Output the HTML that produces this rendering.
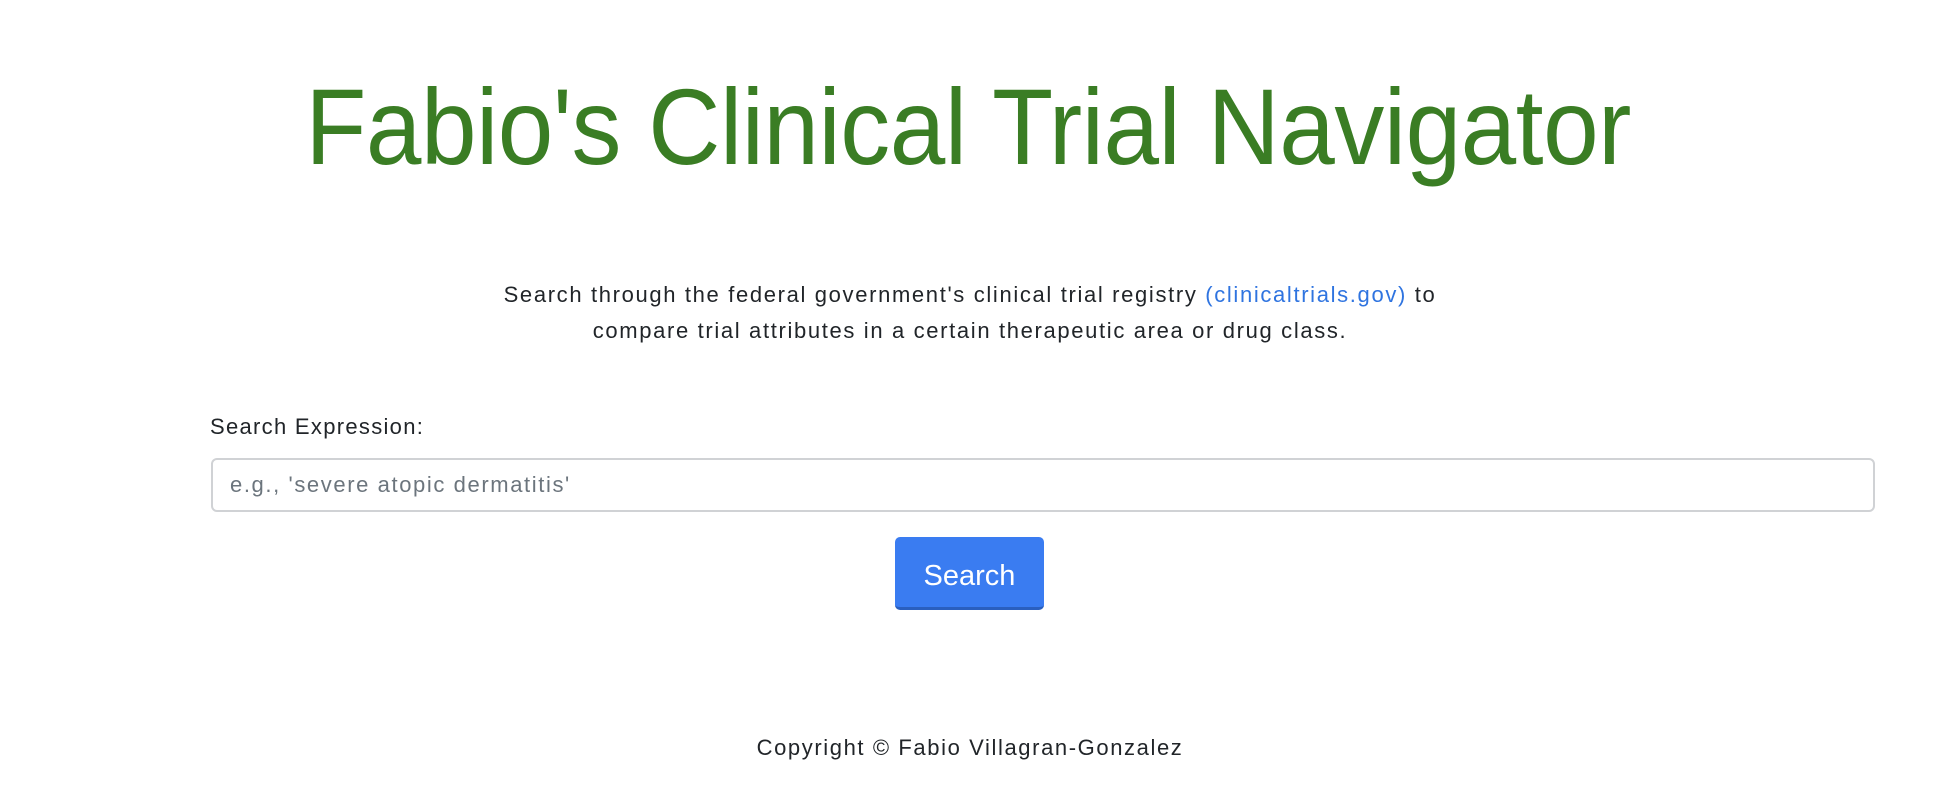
<!DOCTYPE html>
<html><head><meta charset="utf-8"><style>
html,body{margin:0;padding:0;background:#fff;width:1936px;height:810px;overflow:hidden;font-family:"Liberation Sans",sans-serif;}
.abs{position:absolute;}
h1{position:absolute;left:0;width:1936px;top:62px;margin:0;text-align:center;font-weight:400;font-size:108px;color:#3a7d24;line-height:130px;letter-spacing:-0.5px;transform:scaleX(0.925);transform-origin:970px 0;}
.p{left:0;width:1940px;top:277px;text-align:center;font-size:22px;line-height:36px;color:#212529;letter-spacing:1.65px;}
.p a{color:#2f74e0;text-decoration:none;}
.lbl{left:210px;top:414px;font-size:22px;color:#212529;letter-spacing:1.3px;}
.inp{left:211px;top:458px;width:1660px;height:50px;border:2px solid #d0d2d5;border-radius:6px;box-sizing:content-box;}
.ph{left:230px;top:472px;font-size:22px;color:#6c757d;letter-spacing:1.6px;}
.btn{left:895px;top:537px;width:149px;height:70px;background:#3a7cf1;border-radius:5px;border-bottom:3px solid #2a5fbf;box-sizing:content-box;color:#fff;font-size:29px;text-align:center;line-height:78px;}
.ft{left:0;width:1940px;top:735px;text-align:center;font-size:22px;color:#212529;letter-spacing:1.6px;}
</style></head><body>
<h1>Fabio's Clinical Trial Navigator</h1>
<div class="abs p">Search through the federal government's clinical trial registry <a>(clinicaltrials.gov)</a> to<br>compare trial attributes in a certain therapeutic area or drug class.</div>
<div class="abs lbl">Search Expression:</div>
<div class="abs inp"></div>
<div class="abs ph">e.g., 'severe atopic dermatitis'</div>
<div class="abs btn">Search</div>
<div class="abs ft">Copyright © Fabio Villagran-Gonzalez</div>
</body></html>
